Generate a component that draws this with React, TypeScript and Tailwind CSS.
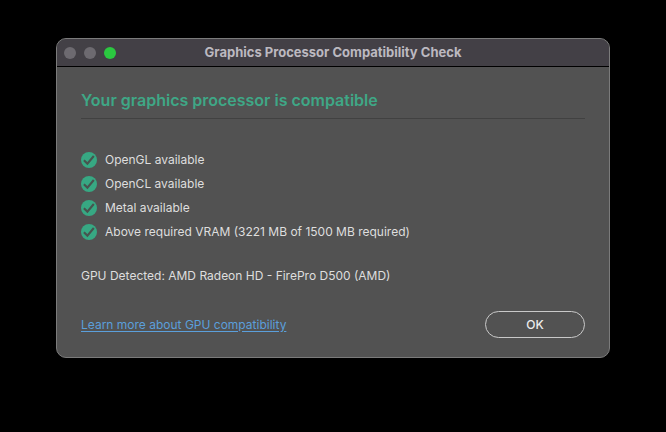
const checks = [
  'OpenGL available',
  'OpenCL available',
  'Metal available',
  'Above required VRAM (3221 MB of 1500 MB required)',
];

function CheckBadge() {
  return (
    <svg width="16" height="16" viewBox="0 0 16 16" className="shrink-0" aria-hidden="true">
      <circle cx="8" cy="8" r="8" fill="#37a883" />
      <path d="M2.9 8.2 6.4 11.6 12.8 4" fill="none" stroke="#47544f" strokeWidth="2.1" />
    </svg>
  );
}

export default function App() {
  return (
    <main className="min-h-screen bg-black px-14 py-[38px] font-['Inter',sans-serif] text-xs text-[#dedede]">
      <section
        role="dialog"
        aria-labelledby="window-title"
        className="overflow-hidden rounded-[10px] border border-[#7b7b7b] bg-[#525252]"
      >
        {/* Title bar */}
        <header className="grid h-7 grid-cols-[1fr_auto_1fr] items-center border-b border-black bg-[#434046] px-[7px]">
          <div className="flex gap-2">
            <button type="button" aria-label="Close" className="size-3 rounded-full bg-[#6d6a70]" />
            <button type="button" aria-label="Minimize" className="size-3 rounded-full bg-[#6d6a70]" />
            <button type="button" aria-label="Zoom" className="size-3 rounded-full bg-[#2bc840]" />
          </div>
          <h1 id="window-title" className="text-[13px] font-bold text-[#bcb9c0]">
            Graphics Processor Compatibility Check
          </h1>
        </header>

        <div className="px-6 pt-[21px] pb-[19px]">
          <h2 className="border-b border-[#414141] pb-[6px] text-base font-semibold text-[#3fa786]">
            Your graphics processor is compatible
          </h2>

          <ul className="mt-[29px]">
            {checks.map((check) => (
              <li key={check} className="flex h-6 items-center gap-2">
                <CheckBadge />
                {check}
              </li>
            ))}
          </ul>

          <p className="mt-[22px] leading-5">GPU Detected: AMD Radeon HD - FirePro D500 (AMD)</p>

          <footer className="mt-[25px] flex items-center justify-between">
            <a href="#" className="text-[#5b9fdb] underline underline-offset-2">
              Learn more about GPU compatibility
            </a>
            <button
              type="button"
              className="h-[27px] w-[100px] rounded-full border border-[#c9c9c9] font-medium text-[#ececec]"
            >
              OK
            </button>
          </footer>
        </div>
      </section>
    </main>
  );
}
